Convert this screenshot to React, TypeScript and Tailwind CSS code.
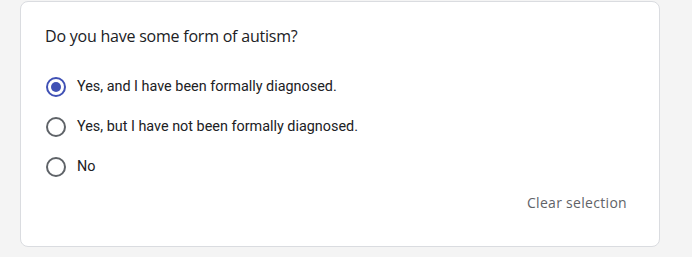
import { useState } from "react";

const options = [
  "Yes, and I have been formally diagnosed.",
  "Yes, but I have not been formally diagnosed.",
  "No",
];

function Radio({ checked }: { checked: boolean }) {
  return (
    <span
      className={
        "flex h-5 w-5 shrink-0 items-center justify-center rounded-full border-2 " +
        (checked ? "border-[#4051b5]" : "border-[#5f6368]")
      }
    >
      {checked && <span className="h-[10px] w-[10px] rounded-full bg-[#4051b5]" />}
    </span>
  );
}

export default function App() {
  const [selected, setSelected] = useState<number | null>(0);

  return (
    <div className="min-h-[257px] w-full bg-[#f4f4f4] pl-[20px] pt-[1px]">
      <div className="h-[246px] w-[640px] rounded-lg border border-[#dadce0] bg-white px-6 pt-[22px]">
        <h2 className="text-[16px] leading-6 tracking-[-0.22px] text-[#202124] [font-family:'Open_Sans','Roboto',sans-serif]">
          Do you have some form of autism?
        </h2>
        <div className="mt-[29px] flex flex-col gap-[20px] [font-family:Roboto,sans-serif]">
          {options.map((o, i) => (
            <button
              key={o}
              className="flex items-center gap-[11px] pl-[1px] text-left text-[14.4px] leading-5 text-[#202124]"
              onClick={() => setSelected(i)}
            >
              <Radio checked={selected === i} />
              <span>{o}</span>
            </button>
          ))}
        </div>
        <div className="mt-[16px] flex justify-end pr-[8px]">
          <button
            className="text-[14px] font-medium leading-5 tracking-[0.3px] text-[#5f6368] [font-family:'Open_Sans',Roboto,sans-serif]"
            onClick={() => setSelected(null)}
          >
            Clear selection
          </button>
        </div>
      </div>
    </div>
  );
}
